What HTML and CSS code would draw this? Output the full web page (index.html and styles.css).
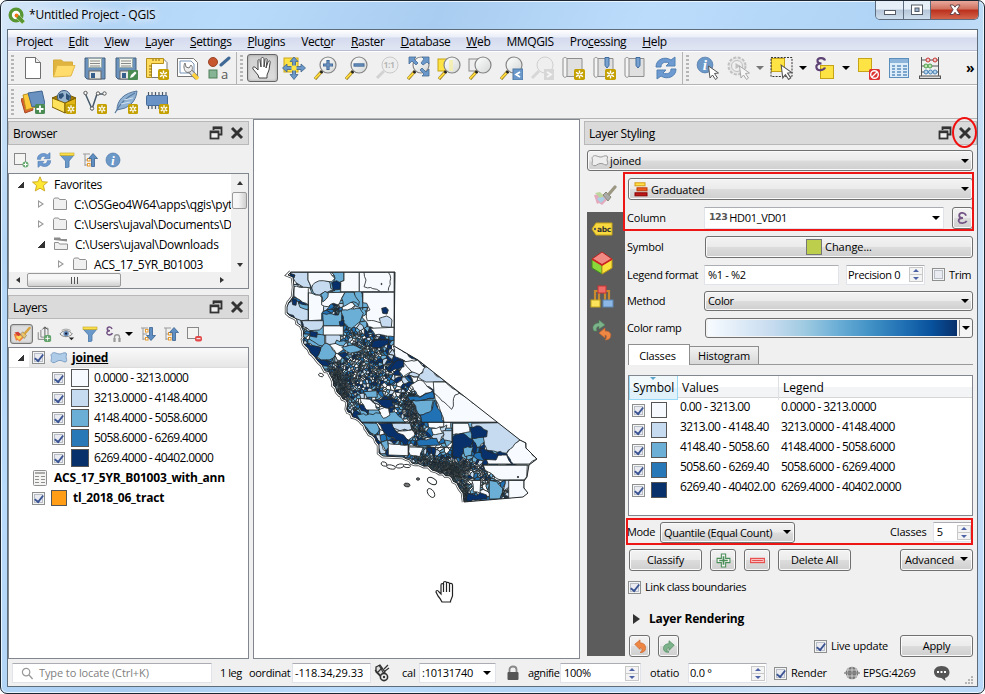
FILE: index.html
```html
<!DOCTYPE html>
<html lang="en">
<head>
<meta charset="utf-8">
<title>*Untitled Project - QGIS</title>
<link rel="stylesheet" href="styles.css">
</head>
<body>
<svg class="defs" aria-hidden="true">
  <defs>
    <linearGradient id="lens" x1="0" y1="0" x2="1" y2="1"><stop offset="0" stop-color="#fff"/><stop offset="1" stop-color="#d4d7d7"/></linearGradient>
    <symbol id="i-star" viewBox="0 0 10 10"><rect width="10" height="10" rx="1.500" fill="#c4a000"/><path d="M5 1.300v7.400M1.800 3.100l6.400 3.800M8.200 3.100L1.800 6.900" stroke="#fff" stroke-width="1.300"/><circle cx="5" cy="5" r="1" fill="#c4a000"/></symbol>
    <symbol id="i-new" viewBox="0 0 24 24"><path d="M4.500 1.500h10l5 5v16h-15z" fill="#fff" stroke="#6f6f6f"/><path d="M14.500 1.500v5h5" fill="#eee" stroke="#6f6f6f"/></symbol>
    <symbol id="i-open" viewBox="0 0 24 24"><path d="M1.500 20V4h8l2 2h9v4" fill="#e0b43e" stroke="#d6aa38"/><path d="M1.500 21L5 9.500h18L19 20z" fill="#ffdc6b" stroke="#e2b849"/></symbol>
    <symbol id="i-save" viewBox="0 0 24 24"><path d="M2 2h20v21H4l-2-2z" fill="#6a92bd" stroke="#44617f"/><rect x="5.500" y="2.500" width="13" height="9" fill="#f4f4ee" stroke="#9aa"/><path d="M7 5h10M7 7.500h10M7 10h10" stroke="#888"/><rect x="6" y="15" width="12" height="8" fill="#e6e9e6" stroke="#666"/><rect x="8" y="17" width="4" height="5" fill="#355e8b"/></symbol>
    <symbol id="i-saveas" viewBox="0 0 24 24"><use href="#i-save"/><rect x="14" y="14" width="10" height="10" rx="1" fill="#4a8a53"/><path d="M16 22l1-3 4-3.500 1.500 1.500-3.500 4z" fill="#fff"/></symbol>
    <symbol id="i-layout" viewBox="0 0 24 24"><path d="M6 2.500h12l4 4v15H6z" fill="#fff" stroke="#777"/><path d="M1.500 2.500h17v5h-12v14h-5z" fill="#ffdc5d" stroke="#b58f1c"/><path d="M4 10h3M4 13h3M4 16h3M4 19h3M8 3v2M11 3v2M14 3v2" stroke="#8a6c10"/><use href="#i-star" x="13" y="13" width="11" height="11"/></symbol>
    <symbol id="i-manager" viewBox="0 0 24 24"><path d="M1.500 2.500h16l4 4v14h-20z" fill="#fff" stroke="#777"/><path d="M4 5h11l3 3v9H4z" fill="none" stroke="#7795bb"/><path d="M12 13l9 9" stroke="#777" stroke-width="4.600"/><path d="M12 13l6 6" stroke="#ddd" stroke-width="3"/><path d="M17 18l5 5" stroke="#ffd13a" stroke-width="3.600"/><path d="M9 7l1 4 3 1 2-3c2 2 2 5-1 7l-3 .5C8 15 7 10 9 7z" fill="#eee" stroke="#777"/></symbol>
    <symbol id="i-style" viewBox="0 0 24 24"><circle cx="6" cy="6" r="4.500" fill="#c7562e" stroke="#994426"/><path d="M14 9l8-7" stroke="#416996" stroke-width="3" stroke-linecap="round"/><rect x="2" y="14" width="8" height="8" fill="#86b494" stroke="#4f7e59"/><text x="14" y="23" font-family="Open Sans,sans-serif" font-size="13" fill="#555">a</text></symbol>
    <symbol id="i-hand" viewBox="0 0 24 24"><path d="M8 22l-1-3-5-6c-1-2 1-3 3-1l2 2V5c0-2 2-2 2 0l1 6V3c0-2 3-2 3 0v8l1-7c0-2 3-2 2 1l-1 7 2-6c1-2 3-1 2 1l-1 7-2 5v3z" fill="#fff" stroke="#444" stroke-linejoin="round"/></symbol>
    <symbol id="i-grab" viewBox="0 0 20 24"><path d="M7 22c-1-2-2-4-4-6l-2-4c0-2 2-2 3 0l2 2V5c0-2 2.500-2 2.500 0V3c0-2 3-2 3 0 0-1 3-1 3 1 0-1 3-1 3 1v11l-2 5v1z" fill="#fff" stroke="#222" stroke-width="1.200"/><path d="M8.500 4v8M11.500 3v9M14.500 4v8" stroke="#222" stroke-width="1.200"/></symbol>
    <symbol id="i-pansel" viewBox="0 0 24 24"><rect x="2" y="2" width="14" height="14" fill="#fee345" stroke="#cba414"/><path d="M12 1l4 4.500h-2.500v5H19V8l4.500 4-4.500 4v-2.500h-5.500v5H16L12 23.500 8 18.500h2.500v-5H5V16L.5 12 5 8v2.500h5.500v-5H8z" fill="#6a98ca" stroke="#416488" stroke-width=".8"/><rect x="9.500" y="9.500" width="5" height="5" fill="#fee345"/></symbol>
    <symbol id="i-lens" viewBox="0 0 24 24"><path d="M9 15L2 23" stroke="#8b7323" stroke-width="3.200"/><path d="M8.500 16L2 22.500" stroke="#ffd93b" stroke-width="2"/><circle cx="8.500" cy="16" r="1.500" fill="#222"/><circle cx="15" cy="9" r="8" fill="url(#lens)" stroke="#858585" stroke-width="1.200"/></symbol>
    <symbol id="i-zin" viewBox="0 0 24 24"><use href="#i-lens"/><path d="M15 4v10M10 9h10" stroke="#426a9b" stroke-width="3.200"/><path d="M15 5v8M11 9h8" stroke="#78a1cc"/></symbol>
    <symbol id="i-zout" viewBox="0 0 24 24"><use href="#i-lens"/><path d="M9.500 9h11" stroke="#426a9b" stroke-width="3.400"/><path d="M10.500 9h9" stroke="#78a1cc"/></symbol>
    <symbol id="i-z11" viewBox="0 0 24 24"><g opacity=".55"><path d="M9 15L2 22" stroke="#bbb" stroke-width="3"/><circle cx="15" cy="9" r="8" fill="#eee" stroke="#aaa"/><text x="8.500" y="12" font-family="Open Sans,sans-serif" font-weight="bold" font-size="8.500" fill="#888">1:1</text></g></symbol>
    <symbol id="i-zfull" viewBox="0 0 24 24"><use href="#i-lens"/><path d="M3 1h7L8 3l4 4-2 2-4-4-3 3zM23 1v7l-2-2-4 3-2-2 3-4-2-2zM23 20h-7l2-2-4-4 2-2 4 4 3-3z" fill="#6a98ca" stroke="#456b96" stroke-width=".8"/></symbol>
    <symbol id="i-zsel" viewBox="0 0 24 24"><rect x="1" y="3" width="12" height="12" fill="#fee345" stroke="#c6a317"/><use href="#i-lens"/><path d="M12 4h4v11h-4z" fill="#f4efa8" opacity=".8"/></symbol>
    <symbol id="i-zlay" viewBox="0 0 24 24"><rect x="1" y="3" width="12" height="12" fill="#eee" stroke="#888"/><use href="#i-lens"/></symbol>
    <symbol id="i-zprev" viewBox="0 0 24 24"><use href="#i-lens"/><rect x="14" y="13" width="10" height="11" fill="#6a98ca" stroke="#4e78a5"/><path d="M21 16l-4 2.500 4 2.500" fill="none" stroke="#fff" stroke-width="1.800"/></symbol>
    <symbol id="i-znext" viewBox="0 0 24 24"><g opacity=".45"><path d="M9 15L2 22" stroke="#bbb" stroke-width="3"/><circle cx="15" cy="9" r="8" fill="#eee" stroke="#aaa"/><rect x="14" y="13" width="10" height="11" fill="#bbb"/><path d="M17 16l4 2.500-4 2.500" fill="none" stroke="#fff" stroke-width="1.800"/></g></symbol>
    <symbol id="i-scroll" viewBox="0 0 24 24"><path d="M5 2.500h16v18H6" fill="#e0e0e0" stroke="#8e8e8e"/><path d="M2 3c0-2 4-2 4 0v16c0 3-4 3-4 0z" fill="#f4f4f4" stroke="#8e8e8e"/></symbol>
    <symbol id="i-map" viewBox="0 0 24 24"><use href="#i-scroll"/><use href="#i-star" x="13" y="13" width="11" height="11"/></symbol>
    <symbol id="i-bm" viewBox="0 0 24 24"><use href="#i-scroll"/><path d="M13 1.500h4v8l-2 2.500-2-2.500z" fill="#77a1ce" stroke="#3f6ca0"/></symbol>
    <symbol id="i-bmnew" viewBox="0 0 24 24"><use href="#i-bm"/><use href="#i-star" x="13" y="13" width="11" height="11"/></symbol>
    <symbol id="i-refresh" viewBox="0 0 24 24"><path d="M2 11C2 3 11 0 17 4l4-3v9h-9l3-3c-4-2-8 0-8 4z" fill="#6d9bd1" stroke="#5380b3"/><path d="M22 13c0 8-9 11-15 7l-4 3v-9h9l-3 3c4 2 8 0 8-4z" fill="#6d9bd1" stroke="#5380b3"/></symbol>
    <symbol id="i-cur" viewBox="0 0 12 15"><path d="M1 1l10 7-4 .5 3 4.500-2 1.500-3-4.500-2.500 3z" fill="#fff" stroke="#555"/></symbol>
    <symbol id="i-info" viewBox="0 0 24 24"><circle cx="12" cy="12" r="10.500" fill="#6d99c8" stroke="#4975a7"/><text x="9" y="19" font-family="Liberation Serif,serif" font-weight="bold" font-style="italic" font-size="20" fill="#fff">i</text></symbol>
    <symbol id="i-ident" viewBox="0 0 24 24"><use href="#i-info" x="0" y="0" width="18" height="18"/><use href="#i-cur" x="11" y="9" width="13" height="15"/></symbol>
    <symbol id="i-action" viewBox="0 0 24 24"><g opacity=".45"><circle cx="10" cy="10" r="8.500" fill="#ddd" stroke="#888" stroke-width="2" stroke-dasharray="3 1.500"/><circle cx="10" cy="10" r="5.500" fill="#eee" stroke="#888"/><path d="M8.500 7l5 3-5 3z" fill="#888"/><use href="#i-cur" x="11" y="9" width="13" height="15"/></g></symbol>
    <symbol id="i-select" viewBox="0 0 24 24"><rect x="1.500" y="2.500" width="13" height="13" fill="#fee345" stroke="#c6a317"/><rect x="1" y="1.500" width="21" height="19" fill="none" stroke="#333" stroke-dasharray="2 1.200"/><use href="#i-cur" x="9" y="8" width="15" height="16"/></symbol>
    <symbol id="i-expr" viewBox="0 0 24 24"><rect x="7.500" y="9.500" width="13" height="13" fill="#fee345" stroke="#c6a317"/><path d="M12 4.500c-1-3.500-8-3-7.500.5 0 2 2 2.500 4 2.500-3.500 0-6 1.500-5 4.500 1 3.500 7.500 2.500 8.500-.5" fill="none" stroke="#5d4174" stroke-width="2.200"/></symbol>
    <symbol id="i-desel" viewBox="0 0 24 24"><rect x="2.500" y="2.500" width="13" height="13" fill="#fee345" stroke="#c6a317"/><rect x="13" y="13" width="11" height="11" rx="1.500" fill="#d33"/><circle cx="18.500" cy="18.500" r="3.800" fill="none" stroke="#fff" stroke-width="1.400"/><path d="M16 21l5-5" stroke="#fff" stroke-width="1.300"/></symbol>
    <symbol id="i-table" viewBox="0 0 24 24"><rect x="2.500" y="2.500" width="19" height="19" fill="#dcecf8" stroke="#5b8dbd"/><path d="M3 5h18" stroke="#8db5da" stroke-width="4"/><path d="M5 10h3M10 10h4M16 10h4M5 13h3M10 13h4M16 13h4M5 16h3M10 16h4M16 16h4M5 19h3M10 19h4M16 19h4" stroke="#5b8dbd" stroke-width="1.300"/></symbol>
    <symbol id="i-abacus" viewBox="0 0 24 24"><path d="M3.500 1v20M20.500 1v20M3 4h18M3 10h18M3 16h18" stroke="#555"/><rect x="1.500" y="20" width="21" height="2.500" fill="#ddd" stroke="#555"/><g fill="#eecccc" stroke="#c33"><circle cx="10" cy="4" r="2"/><circle cx="17" cy="4" r="2"/></g><g fill="#c2e5b2" stroke="#4d9e4f"><circle cx="8" cy="10" r="2"/><circle cx="12" cy="10" r="2"/></g><g fill="#b9d6ec" stroke="#4a83b5"><circle cx="8" cy="16" r="2"/><circle cx="12.500" cy="16" r="2"/><circle cx="17" cy="16" r="2"/></g></symbol>
    <symbol id="i-dsm" viewBox="0 0 24 24"><path d="M0 9l9-2 3 13-8 3z" fill="#d9622f" stroke="#a8481f"/><path d="M2 5l8-2 5 14-10 3z" fill="#ffca3a" stroke="#bb911c"/><path d="M7 3l14-2 3 13-13 3z" fill="#6992c1" stroke="#41658f"/><rect x="14" y="14" width="10" height="10" rx="1.500" fill="#4a8a53"/><path d="M19 15.500v7M15.500 19h7" stroke="#fff" stroke-width="1.800"/></symbol>
    <symbol id="i-gpkg" viewBox="0 0 24 24"><path d="M0 8l12-5 12 5-11 6z" fill="#a67f05" stroke="#7a5d00"/><circle cx="12" cy="7" r="6.500" fill="#9ab5d0" stroke="#395b80"/><path d="M7 4l4-1 1 3-3 3-2-1zM14 3l4 3-1 5-3-2z" fill="#2f5278"/><path d="M0 8l13 5v10L0 17z" fill="#ffe25c" stroke="#7a5d00"/><path d="M13 13l11-5v9l-11 6z" fill="#e2b616" stroke="#7a5d00"/><use href="#i-star" x="14" y="14" width="10" height="10"/></symbol>
    <symbol id="i-shp" viewBox="0 0 24 24"><path d="M2 3l7 16L14 4h6" fill="none" stroke="#44596b" stroke-width="1.500"/><g fill="#fff" stroke="#555"><circle cx="2.500" cy="3" r="1.700"/><circle cx="9" cy="18.500" r="1.700"/><circle cx="15" cy="3.500" r="1.700"/><circle cx="21.500" cy="3.500" r="1.700"/></g><use href="#i-star" x="14" y="14" width="10" height="10"/></symbol>
    <symbol id="i-feather" viewBox="0 0 24 24"><path d="M3 20C3 10 10 3 23 1c-1 8-4 13-12 17-3 1-5 1-8 2z" fill="#8fb1d4" stroke="#55789e"/><path d="M1 23C5 15 11 8 21 3" fill="none" stroke="#55789e" stroke-width="1.200"/><path d="M7 14l9-2M10 10l9-2" stroke="#d3e3f1"/><use href="#i-star" x="14" y="14" width="10" height="10"/></symbol>
    <symbol id="i-chip" viewBox="0 0 24 24"><path d="M3.500 2v17M7 2v17M10.500 2v17M14 2v17M17.500 2v17M21 2v17" stroke="#4c5a68" stroke-width="1.200"/><rect x="1.500" y="5.500" width="21" height="10" rx="1" fill="#6992c6" stroke="#456b9a"/><use href="#i-star" x="14" y="14" width="10" height="10"/></symbol>
    <symbol id="i-float" viewBox="0 0 14 14"><path d="M4.500 4V1.500h8v7H10" fill="none" stroke="#333" stroke-width="1.800"/><path d="M4 2h9" stroke="#333" stroke-width="2.400"/><rect x="1.500" y="5.500" width="8" height="7" fill="#eee" stroke="#333" stroke-width="1.800"/><path d="M1 6h9" stroke="#333" stroke-width="2.400"/></symbol>
    <symbol id="i-x" viewBox="0 0 14 14"><path d="M2 2l10 10M12 2L2 12" stroke="#333" stroke-width="2.900"/></symbol>
    <symbol id="i-addlay" viewBox="0 0 16 16"><rect x="1.500" y="1.500" width="11" height="11" fill="#f4f4f2" stroke="#888"/><circle cx="12.500" cy="12.500" r="3" fill="#6aab72"/><path d="M12.500 10.500v4M10.500 12.500h4" stroke="#fff"/></symbol>
    <symbol id="i-funnel" viewBox="0 0 16 16"><path d="M1 3h14l-5 6v6l-3.500 1V9z" fill="#6a98c8" stroke="#4a78a8" stroke-width=".8"/><rect x="1" y="1" width="14" height="2.600" fill="#fbe04c" stroke="#c4a520" stroke-width=".6"/></symbol>
    <symbol id="i-up" viewBox="0 0 16 16"><path d="M1 2h7M3 2v12M3 8h4M3 13h4" fill="none" stroke="#999"/><rect x="5.500" y="6.500" width="2.500" height="2.500" fill="#fff" stroke="#e79a2d"/><rect x="5.500" y="11.500" width="2.500" height="2.500" fill="#fff" stroke="#e79a2d"/><path d="M11 1.500l4.500 5h-3v8h-3v-8h-3z" fill="#5f8fc3" stroke="#39618e" stroke-width=".8"/></symbol>
    <symbol id="i-down" viewBox="0 0 16 16"><path d="M1 2h7M3 2v12M3 8h4M3 13h4" fill="none" stroke="#999"/><rect x="5.500" y="3.500" width="2.500" height="2.500" fill="#fff" stroke="#e79a2d"/><rect x="5.500" y="11.500" width="2.500" height="2.500" fill="#fff" stroke="#e79a2d"/><path d="M11 14.500l4.500-5h-3v-8h-3v8h-3z" fill="#5f8fc3" stroke="#39618e" stroke-width=".8"/></symbol>
    <symbol id="i-fav" viewBox="0 0 16 16"><path d="M8 .8l2.100 4.900 5.400.4-4.100 3.500 1.300 5.300L8 12.200l-4.700 2.700 1.300-5.300L.5 6.100l5.400-.4z" fill="#ffe733" stroke="#c8a41c" stroke-width=".9"/></symbol>
    <symbol id="i-folder" viewBox="0 0 16 14"><path d="M1.500 2.500l1-1.500h4l1 1.500h6l1 1v9h-13z" fill="#f0f0f0" stroke="#909090"/></symbol>
    <symbol id="i-folder2" viewBox="0 0 16 14"><path d="M1 3V.5h6l1 1.500h6v2.500" fill="#8c8c8c"/><path d="M1.500 12.500v-7h4l1 1.500h8v5.500z" fill="#f0f0f0" stroke="#909090"/></symbol>
    <symbol id="i-poly" viewBox="0 0 18 14"><path d="M2 2.500c2-2 4 0 7 .5s4-2 7-1c1.500 1-.5 3 .2 5s.8 4-1.200 4-3-2-6-1.500-4 3-6.500 2-.8-3-1-5-1-3 .5-4z" fill="var(--pf,#aecbe8)" stroke="var(--ps,#7d9fc4)"/></symbol>
    <symbol id="i-eye" viewBox="0 0 18 16"><path d="M1 8c4-5 10-5 14 0-4 4-10 4-14 0z" fill="#eee" stroke="#777"/><circle cx="8" cy="7.500" r="3" fill="#6088b5"/><circle cx="8" cy="7.500" r="1.300" fill="#113"/><path d="M3 4c3-2 7-2 10 0" fill="none" stroke="#999"/><path d="M11 12h6l-3 3z" fill="#222"/></symbol>
    <symbol id="i-brush" viewBox="0 0 24 24"><path d="M1 12l8-1 5 6-5 5-3-2-2 1z" fill="var(--bb,#f0823b)"/><path d="M4 16l4-4 4 4-4 4z" fill="var(--bc,#fcd95c)"/><path d="M2 10l5-1 4 4-4 2z" fill="var(--bd,#cf3f34)"/><path d="M10 12l3-3 5 5-3 4z" fill="var(--bf,#e8c46a)" stroke="#887"/><path d="M16 11l6-7" stroke="var(--be,#d7a33a)" stroke-width="3.200" stroke-linecap="round"/></symbol>
    <symbol id="i-group" viewBox="0 0 18 18"><path d="M2.500 7v8h7M5.500 4.500v8h7M8.500 2.500h5v8" fill="none" stroke="#777"/><path d="M10 1v10M7 4l3-3 3 3" fill="none" stroke="#555"/><rect x="9" y="10" width="8" height="8" rx="2" fill="#64a36c"/><path d="M13 11.500v5M10.500 14h5" stroke="#fff"/></symbol>
    <symbol id="i-eps" viewBox="0 0 14 14"><path d="M11 4C9-.5 3 .5 3.500 4c0 2 2 2.500 4 2.500-3 0-5 1.200-4.500 3.500 1 3 7 2.500 8.500-.5" fill="none" stroke="#755586" stroke-width="2"/></symbol>
    <symbol id="i-epsfilter" viewBox="0 0 16 16"><path d="M7 3C6 0 2 .7 2.300 3c0 1.400 1.400 1.800 2.700 1.800-2 0-3.400.8-3 2.600.6 2.200 4.600 1.800 5.500-.2" fill="none" stroke="#755586" stroke-width="1.600"/><path d="M9.500 14v-3c0-3 5-3 5 0v3" fill="none" stroke="#999" stroke-width="1.300"/><path d="M9.500 12v4M14.500 12v4" stroke="#999" stroke-width="2.200"/></symbol>
    <symbol id="i-rm" viewBox="0 0 16 16"><rect x="1.500" y="1.500" width="11" height="11" fill="#f4f4f2" stroke="#888"/><rect x="9" y="10" width="7" height="5.500" rx="2" fill="#e24a4a"/><path d="M10.500 12.700h4" stroke="#fff"/></symbol>
    <symbol id="i-tbl" viewBox="0 0 14 16"><rect x=".5" y=".5" width="13" height="15" rx="1" fill="#f4f4f2" stroke="#8f8f8f"/><path d="M2 3h10" stroke="#aaa" stroke-width="2"/><path d="M2 6.500h4M8 6.500h4M2 9.500h4M8 9.500h4M2 12.500h4M8 12.500h4" stroke="#8f8f8f"/></symbol>
    <symbol id="i-undo" viewBox="0 0 16 16"><path d="M2 6l6-5v3.500c5 0 7 3 6 8-1 2-3 3-6 3 3-1.500 3-5.500 0-5.500V12z" fill="#ee8644" stroke="#c9642a" stroke-width=".8"/></symbol>
    <symbol id="i-redo" viewBox="0 0 16 16"><path d="M14 7L8 2v3.500c-5 0-7 3-6 7 1 2 3 3 6 2.500-3-1.500-3-5 0-5V13z" fill="#7db38a" stroke="#4f8a5d" stroke-width=".8"/></symbol>
    <symbol id="i-search" viewBox="0 0 14 14"><circle cx="5.500" cy="5.500" r="4" fill="none" stroke="#999" stroke-width="1.300"/><path d="M8.500 8.500L12.500 13" stroke="#999" stroke-width="1.500"/></symbol>
    <symbol id="i-grip" viewBox="0 0 9 9"><path d="M7 1h2M4 4h2M7 4h2M1 7h2M4 7h2M7 7h2" stroke="#b5b5b5" stroke-width="2"/></symbol>
  </defs>
</svg>

<div class="window">
  <header class="titlebar">
    <svg class="logo" viewBox="0 0 18 18"><circle cx="8.500" cy="8.500" r="6.200" fill="#fff" stroke="#589632" stroke-width="3.600"/><path d="M8 8l4 .5 6 6.500-3 3-6-6z" fill="#589632" stroke="#d8efc4" stroke-width=".6"/><circle cx="9" cy="9" r="2" fill="#ee7913"/></svg>
    <span class="title">*Untitled Project - QGIS</span>
    <div class="winbtns">
      <span class="wb wb-min"><svg viewBox="0 0 14 12"><rect x="1.500" y="6.500" width="11" height="4" fill="#fff" stroke="#555c68"/></svg></span>
      <span class="wb wb-max"><svg viewBox="0 0 14 12"><rect x="1.500" y="1" width="11" height="9.500" fill="#fff" stroke="#555c68"/><rect x="5" y="4" width="4" height="3.500" fill="#9db5d0" stroke="#555c68"/></svg></span>
      <span class="wb wb-close"><svg viewBox="0 0 14 12"><path d="M2 1h3.300L7 3.200 8.700 1H12L8.900 5.800 12 10.500H8.700L7 8.300l-1.700 2.200H2l3.100-4.700z" fill="#fff" stroke="#5b3b44" stroke-width=".9"/></svg></span>
    </div>
  </header>

  <div class="client">
    <nav class="menubar">
      <span>Pro<u>j</u>ect</span><span><u>E</u>dit</span><span><u>V</u>iew</span><span><u>L</u>ayer</span><span><u>S</u>ettings</span><span><u>P</u>lugins</span><span>Vect<u>o</u>r</span><span><u>R</u>aster</span><span><u>D</u>atabase</span><span><u>W</u>eb</span><span>MMQGIS</span><span>Pro<u>c</u>essing</span><span><u>H</u>elp</span>
    </nav>
    <div class="toolbar">
      <div class="tgroup g1">
        <i class="handle"></i>
        <span class="t"><svg><use href="#i-new"/></svg></span><span class="t"><svg><use href="#i-open"/></svg></span><span class="t"><svg><use href="#i-save"/></svg></span><span class="t"><svg><use href="#i-saveas"/></svg></span><span class="t"><svg><use href="#i-layout"/></svg></span><span class="t"><svg><use href="#i-manager"/></svg></span><span class="t"><svg><use href="#i-style"/></svg></span>
      </div>
      <div class="tgroup g2">
        <i class="handle"></i>
        <span class="t on"><svg><use href="#i-hand"/></svg></span><span class="t"><svg><use href="#i-pansel"/></svg></span><span class="t"><svg><use href="#i-zin"/></svg></span><span class="t"><svg><use href="#i-zout"/></svg></span><span class="t"><svg><use href="#i-z11"/></svg></span><span class="t"><svg><use href="#i-zfull"/></svg></span><span class="t"><svg><use href="#i-zsel"/></svg></span><span class="t"><svg><use href="#i-zlay"/></svg></span><span class="t"><svg><use href="#i-zprev"/></svg></span><span class="t"><svg><use href="#i-znext"/></svg></span><span class="t"><svg><use href="#i-map"/></svg></span><span class="t"><svg><use href="#i-bmnew"/></svg></span><span class="t"><svg><use href="#i-bm"/></svg></span><span class="t"><svg><use href="#i-refresh"/></svg></span>
      </div>
      <div class="tgroup g3">
        <i class="handle"></i>
        <span class="t"><svg><use href="#i-ident"/></svg></span><span class="t"><svg><use href="#i-action"/></svg></span><i class="caret dim"></i><span class="t"><svg><use href="#i-select"/></svg></span><i class="caret"></i><span class="t"><svg><use href="#i-expr"/></svg></span><i class="caret"></i><span class="t"><svg><use href="#i-desel"/></svg></span><span class="t"><svg><use href="#i-table"/></svg></span><span class="t"><svg><use href="#i-abacus"/></svg></span>
        <b class="more">»</b>
      </div>
    </div>
    <div class="toolbar">
      <div class="tgroup">
        <i class="handle"></i>
        <span class="t"><svg><use href="#i-dsm"/></svg></span><span class="t"><svg><use href="#i-gpkg"/></svg></span><span class="t"><svg><use href="#i-shp"/></svg></span><span class="t"><svg><use href="#i-feather"/></svg></span><span class="t"><svg><use href="#i-chip"/></svg></span>
      </div>
    </div>

    <main class="work">
      <section class="left">
        <div class="dockbar"><span>Browser</span><svg><use href="#i-float"/></svg><svg><use href="#i-x"/></svg></div>
        <div class="mini">
          <svg><use href="#i-addlay"/></svg><svg><use href="#i-refresh"/></svg><svg><use href="#i-funnel"/></svg><svg><use href="#i-up"/></svg><svg><use href="#i-info"/></svg>
        </div>
        <div class="tree browser">
          <div class="treemain">
            <ul class="rows">
              <li class="l0"><i class="open"></i><svg class="fav"><use href="#i-fav"/></svg><span>Favorites</span></li>
              <li class="l1"><i class="shut"></i><svg class="fol"><use href="#i-folder"/></svg><span>C:\OSGeo4W64\apps\qgis\pyt</span></li>
              <li class="l1"><i class="shut"></i><svg class="fol"><use href="#i-folder"/></svg><span>C:\Users\ujaval\Documents\D</span></li>
              <li class="l1"><i class="open"></i><svg class="fol"><use href="#i-folder2"/></svg><span>C:\Users\ujaval\Downloads</span></li>
              <li class="l2"><i class="shut"></i><svg class="fol"><use href="#i-folder"/></svg><span>ACS_17_5YR_B01003</span></li>
            </ul>
            <div class="vbar"><i class="tri up"></i><b></b><i class="tri dn"></i></div>
          </div>
          <div class="hbar"><i class="tri lt"></i><b><s></s><s></s><s></s></b><i class="tri rt"></i></div>
        </div>
        <div class="dockbar second"><span>Layers</span><svg><use href="#i-float"/></svg><svg><use href="#i-x"/></svg></div>
        <div class="mini layers-tools">
          <span class="pressed"><svg><use href="#i-brush"/></svg></span><svg><use href="#i-group"/></svg><svg><use href="#i-eye"/></svg><svg><use href="#i-funnel"/></svg><svg><use href="#i-epsfilter"/></svg><i class="caret"></i><svg><use href="#i-down"/></svg><svg><use href="#i-up"/></svg><svg><use href="#i-rm"/></svg>
        </div>
        <div class="tree layers">
          <ul class="rows">
            <li class="l0 sel"><i class="open"></i><span class="cb"></span><svg class="poly"><use href="#i-poly"/></svg><b><u>joined</u></b></li>
            <li class="l3"><span class="cb"></span><i class="sw c1"></i><span class="num">0.0000 - 3213.0000</span></li>
            <li class="l3"><span class="cb"></span><i class="sw c2"></i><span class="num">3213.0000 - 4148.4000</span></li>
            <li class="l3"><span class="cb"></span><i class="sw c3"></i><span class="num">4148.4000 - 5058.6000</span></li>
            <li class="l3"><span class="cb"></span><i class="sw c4"></i><span class="num">5058.6000 - 6269.4000</span></li>
            <li class="l3"><span class="cb"></span><i class="sw c5"></i><span class="num">6269.4000 - 40402.0000</span></li>
            <li class="l4"><svg class="tbl"><use href="#i-tbl"/></svg><b>ACS_17_5YR_B01003_with_ann</b></li>
            <li class="l4"><span class="cb"></span><i class="sw c6"></i><b>tl_2018_06_tract</b></li>
          </ul>
        </div>
      </section>

      <section class="canvas">
        <svg id="map" viewBox="254 120 325 538"></svg>
      </section>

      <section class="right">
        <div class="dockbar"><span>Layer Styling</span><svg><use href="#i-float"/></svg><svg><use href="#i-x"/></svg><i class="ring"></i></div>
        <div class="combo layer-combo"><svg class="poly plain"><use href="#i-poly"/></svg><span>joined</span><i class="caret"></i></div>
        <div class="styling">
          <aside class="side">
            <div class="sidetop"><svg class="brush2"><use href="#i-brush"/></svg></div>
            <div class="sidedark">
              <svg viewBox="0 0 24 24"><path d="M2 12l4-6h16v12H6z" fill="#f7d93f" stroke="#c9a61b"/><circle cx="5" cy="12" r="1.200" fill="#5c5c5c"/><text x="7" y="15" font-family="DejaVu Sans,sans-serif" font-weight="bold" font-size="7.500" fill="#333">abc</text></svg>
              <svg viewBox="0 0 24 24"><path d="M12 1l10 7-10 6L2 8z" fill="#f08a82" stroke="#b22"/><path d="M2 8l10 6v9L2 17z" fill="#8ad83a" stroke="#3f8a1c"/><path d="M22 8l-10 6v9l10-6z" fill="#fbe13c" stroke="#b99a14"/><path d="M2 8l10 6 10-6" fill="none" stroke="#c22" stroke-width="1.600"/></svg>
              <svg viewBox="0 0 24 24"><path d="M5 16V6h14v10M9 7v12M15 7v12" fill="none" stroke="#c8892f" stroke-width="2.200"/><rect x="8" y="1" width="8" height="7" fill="#ee6c68" stroke="#c33"/><rect x="1" y="15" width="9" height="7" fill="#fbe45c" stroke="#c4a520"/><rect x="13" y="15" width="10" height="7" fill="#8db8e6" stroke="#5c87b5"/></svg>
              <svg viewBox="0 0 24 24"><path d="M4 12C1 7 5 4 9 4V1l6 5-6 4V7.500c-2 0-3.500 2-2 4.500z" fill="#7db38a" stroke="#4f8a5d" stroke-width=".6"/><path d="M9 14l6-5v3c5 0 7 3 5 7-1 1.500-3 2-5 2 2-1.500 2-5 0-5v3z" fill="#ee8644" stroke="#c9642a" stroke-width=".6"/></svg>
            </div>
          </aside>
          <div class="form">
            <div class="combo renderer"><svg class="grad" viewBox="0 0 14 15"><rect x="1" y=".8" width="10" height="3" fill="#ffe04a" stroke="#d69a12"/><rect x="3" y="5.800" width="10" height="3" fill="#f05a1c" stroke="#b83c0c"/><rect x="1" y="10.800" width="12" height="3" fill="#c01818" stroke="#800"/></svg><span>Graduated</span><i class="caret"></i></div>
            <div class="row r-column"><label>Column</label><div class="input"><b class="n123">123</b><span>HD01_VD01</span><i class="caret"></i></div><div class="btn eps"><svg><use href="#i-eps"/></svg></div></div>
            <div class="row r-symbol"><label>Symbol</label><div class="btn change"><i class="green"></i>Change...</div></div>
            <div class="row r-legend"><label>Legend format</label><div class="input fmt">%1 - %2</div><div class="input prec"><span>Precision 0</span><i class="spin"></i></div><span class="cb off"></span><span class="trim">Trim</span></div>
            <div class="row r-method"><label>Method</label><div class="combo"><span>Color</span><i class="caret"></i></div></div>
            <div class="row r-ramp"><label>Color ramp</label><div class="ramp"><i class="bar"></i><span><i class="caret"></i></span></div></div>
            <div class="tabs"><span class="tab active">Classes</span><span class="tab">Histogram</span></div>
            <div class="table">
              <div class="th"><span class="sorted">Symbol</span><span>Values</span><span>Legend</span></div>
              <div class="tr"><span><i class="cb"></i><i class="sw c1"></i></span><span>0.00 - 3213.00</span><span>0.0000 - 3213.0000</span></div>
              <div class="tr"><span><i class="cb"></i><i class="sw c2"></i></span><span>3213.00 - 4148.40</span><span>3213.0000 - 4148.4000</span></div>
              <div class="tr"><span><i class="cb"></i><i class="sw c3"></i></span><span>4148.40 - 5058.60</span><span>4148.4000 - 5058.6000</span></div>
              <div class="tr"><span><i class="cb"></i><i class="sw c4"></i></span><span>5058.60 - 6269.40</span><span>5058.6000 - 6269.4000</span></div>
              <div class="tr"><span><i class="cb"></i><i class="sw c5"></i></span><span>6269.40 - 40402.00</span><span>6269.4000 - 40402.0000</span></div>
            </div>
            <div class="row r-mode"><label>Mode</label><div class="combo"><span>Quantile (Equal Count)</span><i class="caret"></i></div><span class="cl">Classes</span><div class="input five"><span>5</span><i class="spin"></i></div></div>
            <div class="row r-btns"><div class="btn b72">Classify</div><div class="btn b26"><svg viewBox="0 0 14 14"><path d="M5 1h4v4h4v4H9v4H5V9H1V5h4z" fill="#f4f4f4" stroke="#4b8f58"/><path d="M7 3v8M3 7h8" stroke="#4b8f58" stroke-width="1.600"/></svg></div><div class="btn b26"><svg viewBox="0 0 14 14"><rect x="0" y="4.500" width="14" height="5" fill="#e85050"/><rect x="1.200" y="5.600" width="11.600" height="2.800" fill="#fbd4d4"/><path d="M2 7h10" stroke="#e85050" stroke-width="1.200"/></svg></div><div class="btn b72">Delete All</div><div class="btn b72 adv">Advanced<i class="caret"></i></div></div>
            <div class="row r-link"><span class="cb"></span><span>Link class boundaries</span></div>
            <div class="row r-render"><i class="tri rt big"></i><b>Layer Rendering</b></div>
            <div class="row r-apply"><div class="btn b21"><svg><use href="#i-undo"/></svg></div><div class="btn b21"><svg><use href="#i-redo"/></svg></div><span class="cb"></span><span>Live update</span><div class="btn b72">Apply</div></div>
            <i class="mark m1"></i><i class="mark m2"></i>
          </div>
        </div>
      </section>
    </main>

    <footer class="status">
      <div class="input locate"><svg><use href="#i-search"/></svg><span>Type to locate (Ctrl+K)</span></div>
      <span class="w-leg">1 leg</span>
      <span class="w-coord">oordinat</span>
      <div class="input coord">-118.34,29.33</div>
      <svg class="mouse" viewBox="0 0 16 18"><path d="M2 3l4-2 5 7-5 4-4-4z" fill="#ddd" stroke="#333" stroke-width="1.300"/><path d="M1 6l8 8M5 1l5 9M14 1l-4 4M15 4l-4 3M3 9l5-5" stroke="#333" stroke-width="1.200"/><circle cx="10" cy="13" r="3.600" fill="#eee" stroke="#333" stroke-width="1.600"/><circle cx="10" cy="13" r="1.200" fill="#333"/></svg>
      <span class="w-cal">cal</span>
      <div class="input scale"><span>:10131740</span><i class="caret"></i></div>
      <svg class="lock" viewBox="0 0 12 16"><path d="M2.500 8V4.500c0-4 7-4 7 0V8" fill="none" stroke="#888" stroke-width="1.800"/><rect x=".5" y="7" width="11" height="8" rx="1" fill="#555"/></svg>
      <span class="w-mag">agnifie</span>
      <div class="input mag"><span>100%</span><i class="spin"></i></div>
      <span class="w-rot">otatio</span>
      <div class="input rot"><span>0.0 °</span><i class="spin"></i></div>
      <span class="cb"></span><span class="w-render">Render</span>
      <svg class="globe" viewBox="0 0 16 14"><circle cx="8" cy="7" r="6.300" fill="#777"/><path d="M0 7h16M2 4h12M2 10h12M8 0v14M5 1c-2 4-2 8 0 12M11 1c2 4 2 8 0 12" fill="none" stroke="#ddd" stroke-width=".8"/><path d="M0 7h16" stroke="#666"/></svg>
      <span class="w-epsg">EPSG:4269</span>
      <svg class="chat" viewBox="0 0 16 16"><path d="M8 1c10 0 10 11 3.500 12L12 16l-4-3C-2 13-2 1 8 1z" fill="#555"/><path d="M3.500 7h2M7 7h2M10.500 7h2" stroke="#fff" stroke-width="1.800"/></svg>
      <svg class="gripper"><use href="#i-grip"/></svg>
    </footer>
  </div>
</div>
<script src="map.js"></script>
</body>
</html>
```
FILE: styles.css
```css
* { box-sizing: border-box; }
html, body { margin: 0; height: 100%; }
body { width: 985px; height: 694px; overflow: hidden; background: #fff; font: 12px/20px "Open Sans", "Noto Sans", sans-serif; letter-spacing: -.35px; color: #000; white-space: nowrap; }
.defs { position: absolute; width: 0; height: 0; }
ul { list-style: none; margin: 0; padding: 0; }
i { font-style: normal; }
svg { display: block; flex: none; }
b { letter-spacing: -.18px; }

.window { width: 985px; height: 694px; border: 1px solid #1c2530; border-radius: 7px; display: flex; flex-direction: column; padding: 0 6px 6px; box-shadow: inset 0 0 0 1px #e8f5ff; background: linear-gradient(115deg, #d8e8f8 0, #b4d6f6 9%, #b9dbfb 18%, #a9cdf0 34%, #bcdcfb 50%, #b0d4f5 68%, #cfe4f8 85%, #b8d8f8 100%); }
.titlebar { height: 28px; display: flex; align-items: flex-start; }
.logo { width: 17px; height: 17px; margin: 6px 0 0 1px; }
.title { margin: 4px 0 0 4px; padding: 0 10px 0 0; font-size: 12px; letter-spacing: -.22px; text-shadow: 0 0 8px #fff, 0 0 8px #fff; }
.winbtns { margin-left: auto; margin-right: -1px; display: flex; height: 19px; border: 1px solid #5c6b7d; border-top: 0; border-radius: 0 0 5px 5px; overflow: hidden; }
.wb { display: flex; align-items: center; justify-content: center; background: linear-gradient(#e6eef7 0 45%, #b5c6d9 50%, #cfdeed); border-right: 1px solid #5c6b7d; }
.wb svg { width: 14px; height: 12px; }
.wb-min { width: 28px; } .wb-max { width: 27px; }
.wb-close { width: 47px; border: 0; background: linear-gradient(#e8a99c 0, #d1705e 45%, #bb2f1c 50%, #d3654c); }

.client { flex: 1; border: 1px solid #5f6c7a; background: #f0f0f0; display: flex; flex-direction: column; width: 971px; min-height: 0; }
.menubar { height: 21px; flex: none; display: flex; gap: 16px; padding-left: 8px; line-height: 23px; letter-spacing: -.37px; background: linear-gradient(#fff 0, #e9edf7 35%, #d5dbee 40%, #e0e5f3 95%); border-bottom: 1px solid #b6bccc; }
.menubar span { flex: none; }
u { text-underline-offset: 1px; text-decoration-thickness: 1px; }
.toolbar { height: 34px; flex: none; display: flex; border-bottom: 1px solid #b4b4b4; border-top: 1px solid #fff; }
.tgroup { display: flex; align-items: center; padding-left: 3px; }
.g1 { width: 229px; border-right: 1px solid #b4b4b4; }
.g2 { width: 446px; border-right: 1px solid #b4b4b4; }
.g3 { flex: 1; }
.handle { width: 3px; height: 27px; margin-right: 3px; background: repeating-linear-gradient(#b6b6b6 0 2px, transparent 2px 4px); }
.t { width: 31px; height: 28px; display: flex; align-items: center; justify-content: center; flex: none; }
.t svg { width: 24px; height: 24px; }
.t.on { border: 1px solid #666; border-radius: 3px; background: linear-gradient(#cfcfcf, #dedede); box-shadow: inset 0 0 3px #999; }
.g2 .handle { margin-right: 4px; }
.caret { display: inline-block; flex: none; width: 0; height: 0; border: 4px solid transparent; border-top: 4px solid #000; border-bottom: 0; }
.g3 .caret { margin: 0 2.500px 0 1.500px; }
.caret.dim { border-top-color: #777; }
.more { margin-left: 21px; font-size: 14px; }

.work { height: 540px; display: flex; }
.left { width: 241px; padding-top: 2px; display: flex; flex-direction: column; }
.dockbar { height: 24px; flex: none; display: flex; align-items: center; gap: 7px; background: #dadada; border: 1px solid #b8b8b8; padding: 0 4px; position: relative; }
.dockbar span { margin: 1px auto 0 0; letter-spacing: -.35px; }
.dockbar svg { width: 14px; height: 14px; }
.second { margin-top: 6px; }
.mini { height: 28px; flex: none; display: flex; align-items: center; gap: 7px; padding: 2px 0 0 5px; }
.mini > svg { width: 16px; height: 16px; }
.tree { background: #fff; border: 1px solid #82868f; overflow: hidden; }
.browser { height: 116px; display: flex; flex-direction: column; }
.treemain { display: flex; flex: 1; min-height: 0; overflow: hidden; }
.rows { flex: 1; min-width: 0; overflow: hidden; }
.rows li { height: 20px; display: flex; align-items: center; }
.browser .rows li { letter-spacing: -.3px; }
.browser .rows li span { margin-top: 1px; }
.rows li > .open { width: 7px; height: 7px; background: linear-gradient(135deg, transparent 50%, #333 50%); flex: none; }
.rows li > .shut { width: 0; height: 0; border: 4px solid transparent; border-left: 6px solid #999; border-right: 0; flex: none; position: relative; }
.shut::after { content: ""; position: absolute; left: -5px; top: -2.500px; border: 2.500px solid transparent; border-left: 3.500px solid #fff; border-right: 0; }
.l0 { padding-left: 8px; } .l1 { padding-left: 29px; } .l2 { padding-left: 49px; }
.fav { width: 16px; height: 16px; margin: 0 6px 0 8px; }
.fol { width: 16px; height: 14px; margin: 0 6px 0 8px; }
.vbar { width: 17px; flex: none; background: #f0f0f0; display: flex; flex-direction: column; align-items: center; padding: 7px 1px 5px; }
.vbar b { width: 15px; height: 17px; margin-top: 7px; margin-bottom: auto; border: 1px solid #999; border-radius: 2px; background: linear-gradient(90deg, #f6f6f6 40%, #cfcfcf); }
.hbar { height: 16px; flex: none; background: #f0f0f0; display: flex; align-items: center; padding: 0 24px 0 7px; }
.hbar b { width: 94px; height: 14px; margin-left: 7px; margin-right: auto; border: 1px solid #999; border-radius: 2px; background: linear-gradient(#f6f6f6 40%, #cfcfcf); display: flex; gap: 2px; align-items: center; justify-content: center; }
.hbar s { width: 1px; height: 7px; background: #555; }
.tri { width: 0; height: 0; border: 3.500px solid transparent; flex: none; }
.tri.up { border-top: 0; border-bottom: 4px solid #333; } .tri.dn { border-bottom: 0; border-top: 4px solid #333; }
.tri.lt { border-left: 0; border-right: 4px solid #333; } .tri.rt { border-right: 0; border-left: 4px solid #333; }
.tri.big { border-width: 5.500px 0 5.500px 7px; border-left-color: #333; }

.layers-tools { padding: 2px 0 0 2px; gap: 7px; }
.layers-tools > svg { width: 16px; }
.layers-tools .pressed { width: 23px; height: 20px; margin-right: -4px; border: 1px solid #777; border-radius: 3px; background: #ddd; box-shadow: inset 0 0 2px #888; display: flex; justify-content: center; align-items: center; }
.pressed svg { width: 18px; height: 18px; }
.layers-tools .caret { margin-left: -3px; }
.layers { flex: 1; }
.layers .rows li.sel { background: linear-gradient(90deg, #fff 20px, transparent 20px), linear-gradient(#fafafa, #e6e6e6); border-bottom: 1px solid #ddd; }
.l0 .cb { margin-left: 8px; }
.cb { display: inline-block; flex: none; width: 13px; height: 13px; border: 1px solid #8e8f8f; background: #e9ebf0; box-shadow: inset 0 0 0 1px #f4f4f4, inset 0 0 0 2px #b8bec8; position: relative; }
.cb::after { content: ""; position: absolute; left: 3px; top: 0; width: 4px; height: 8px; border: solid #3a5392; border-width: 0 2px 2px 0; transform: rotate(38deg) scale(.9); }
.cb.off::after { display: none; }
.poly { width: 18px; height: 14px; margin: 0 4px 0 5px; }
.plain { --pf: #eee; --ps: #999; }
.l3 { padding-left: 43px; } .l4 { padding-left: 23px; }
.sw { display: block; flex: none; width: 18px; height: 18px; border: 1px solid #555; }
.l3 .sw { margin: 0 5px 0 6px; } .l4 .sw { margin: 0 6px 0 6px; width: 16px; height: 16px; }
.num { letter-spacing: -.63px; }
.tbl { width: 14px; height: 16px; margin: 0 7px 0 1px; }
.c1 { background: #f7fbff; } .c2 { background: #c6dbef; } .c3 { background: #6baed6; } .c4 { background: #2878b8; } .c5 { background: #08306b; } .c6 { background: #ff9d17; }

.canvas { width: 327px; margin-left: 4px; border: 1px solid #82868f; background: #fff; flex: none; }
.canvas svg { width: 325px; height: 538px; }

.right { width: 393px; margin-left: 4px; padding-top: 2px; flex: none; font-size: 11px; letter-spacing: -.33px; }
.right .dockbar { font-size: 12px; padding-right: 4px; gap: 6px; }
.ring { position: absolute; right: -1px; top: -5px; width: 25px; height: 31px; border: 2px solid #f01010; border-radius: 50%; }
.combo { height: 21px; display: flex; align-items: center; border: 1px solid #707070; border-radius: 3px; background: linear-gradient(#f3f3f3, #ebebeb 48%, #dcdcdc 52%, #cfcfcf); box-shadow: inset 0 0 0 1px #fafafa; padding: 0 3px; line-height: 19px; }
.combo .caret, .input > .caret { margin-left: auto; }
.layer-combo { margin: 5px 3px 0; width: 386px; letter-spacing: -.1px; }
.layer-combo .poly { margin: 0 1px 0 0; }
.styling { display: flex; padding-left: 3px; margin-top: 5px; }
.side { width: 38px; height: 480px; display: flex; flex-direction: column; margin-right: 3px; flex: none; }
.sidetop { height: 36px; padding: 7px 0 0 6px; }
.brush2 { width: 24px; height: 24px; --bb: #e3a9bd; --bc: #a9cfe4; --bd: #bdd59c; --be: #9c9782; --bf: #aaa; }
.sidedark { background: #5c5c5c; flex: 1; padding: 5px 0 0 3px; display: flex; flex-direction: column; gap: 10px; }
.sidedark svg { width: 24px; height: 24px; }
.form { width: 345px; position: relative; }
.row { display: flex; align-items: center; }
.row label { width: 77px; flex: none; margin-left: -1px; }
.renderer { margin-top: 2px; height: 22px; letter-spacing: -.15px; }
.grad { width: 14px; height: 15px; margin: 0 3px 0 2px; }
.input { height: 20px; background: #fff; border: 1px solid #e0e3ea; border-top-color: #abadb3; border-radius: 1px; display: flex; align-items: center; padding: 0 3px; line-height: 18px; overflow: hidden; }
.r-column { height: 22px; margin-top: 7px; }
.r-column .input { width: 240px; height: 22px; }
.r-column label, .r-symbol label { letter-spacing: -.2px; }
.n123 { font: bold 9.500px/18px "DejaVu Sans", sans-serif; color: #555; margin: 0 2px 2px 1px; letter-spacing: -.5px; }
.btn { display: flex; align-items: center; justify-content: center; height: 22px; border: 1px solid #707070; border-radius: 3px; background: linear-gradient(#f3f3f3, #ebebeb 48%, #dcdcdc 52%, #cfcfcf); box-shadow: inset 0 0 0 1px #fafafa; flex: none; }
.eps { width: 21px; margin-left: 8px; }
.eps svg { width: 13px; height: 13px; }
.r-symbol { margin-top: 7px; }
.change { width: 268px; margin-left: 1px; letter-spacing: -.05px; }
.green { width: 16px; height: 16px; background: #bcce4c; border: 1px solid #777; margin-right: 3px; }
.r-legend { margin-top: 6px; height: 21px; }
.fmt { width: 135px; }
.prec { width: 79px; margin: 0 7px; padding: 0 1px; }
.trim { margin-left: 4px; }
.spin { margin-left: auto; width: 14px; height: 15px; flex: none; border: 1px solid #c8c8c8; background: linear-gradient(#f4f4f4 0 45%, #c8c8c8 45% 54%, #f4f4f4 54%); position: relative; }
.spin::before, .spin::after { content: ""; position: absolute; left: 3px; border: 3px solid transparent; }
.spin::before { top: 1px; border-top: 0; border-bottom-color: #4d62a6; }
.spin::after { bottom: 1px; border-bottom: 0; border-top-color: #4d62a6; }
.r-method { margin-top: 5px; }
.r-method .combo { flex: 1; height: 20px; }
.r-method label { padding-top: 1px; }
.r-ramp { margin-top: 7px; }
.ramp { flex: 1; height: 20px; display: flex; border: 1px solid #707070; border-radius: 3px; background: #f4f4f4; padding: 1px 0 1px 2px; margin-left: 1px; }
.ramp .bar { flex: 1; background: linear-gradient(90deg, #f7fbff, #deebf7 13%, #c6dbef 26%, #9ecae1 39%, #6baed6 52%, #4292c6 65%, #2171b5 78%, #08519c 90%, #08306b); }
.ramp span { width: 13px; margin-left: 2px; border-left: 1px solid #888; display: flex; align-items: center; justify-content: center; }
.tabs { height: 21px; margin-top: 6px; display: flex; align-items: flex-end; border-bottom: 1px solid #999; }
.tab { height: 18px; width: 69px; text-align: center; line-height: 18px; border: 1px solid #8e8e8e; border-left: 0; border-bottom: 0; background: linear-gradient(#f2f2f2, #d8d8d8); letter-spacing: -.18px; }
.tab.active { width: 62px; height: 21px; line-height: 21px; margin-bottom: -1px; border-left: 1px solid #8e8e8e; background: #fff; padding-right: 3px; }
.table { height: 141px; margin-top: 10px; border: 1px solid #82868f; background: #fff; font-size: 12px; letter-spacing: -.59px; }
.th, .tr { display: grid; grid-template-columns: 49px 101px 1fr; }
.th { height: 22px; line-height: 23px; letter-spacing: 0; background: linear-gradient(#fff 50%, #f3f4f6 52%); border-bottom: 1px solid #d5d5d5; }
.th span { padding-left: 4px; border-right: 1px solid #dfe0e3; }
.th span:last-child { border: 0; }
.th .sorted { padding-left: 3px; background: linear-gradient(#f2f9fc 50%, #e0f1fa 52%); border: 1px solid #96d9f9; border-top: 0; position: relative; }
.sorted::before { content: ""; position: absolute; top: 1px; left: 20px; border: 3.500px solid transparent; border-top-color: #5ba4cc; border-bottom: 0; }
.tr { height: 20px; line-height: 18px; }
.tr span:nth-child(n+2) { padding-left: 2px; }
.tr span:first-child { display: flex; align-items: center; padding: 2px 0 0 3px; gap: 6px; height: 22px; }
.tr .sw { width: 16px; height: 16px; }
.r-mode { margin-top: 5px; height: 22px; }
.r-mode label { width: 33px; }
.r-mode .combo { width: 135px; height: 21px; padding: 0 3px; }
.cl { margin-left: 95px; letter-spacing: -.15px; }
.five { width: 39px; margin-left: 6px; padding-right: 0; }
.r-btns { margin-top: 6px; padding-left: 1px; gap: 8.500px; letter-spacing: -.15px; }
.b72 { width: 73px; } .b26 { width: 26px; } .b26 svg { width: 15px; height: 15px; } .b21 { width: 21px; }
.r-btns > :nth-child(n+2):nth-child(-n+4) { margin-left: -.5px; }
.b21 svg { width: 14px; height: 14px; }
.r-btns > .adv { margin-left: auto; } .adv .caret { margin: -2px 0 0 6px; }
.r-link { margin-top: 6px; gap: 4px; height: 20px; letter-spacing: -.42px; }
.r-render { margin-top: 12px; padding-left: 5px; gap: 9px; height: 20px; font-size: 12px; }
.r-apply { margin-top: 6px; padding-left: 1px; height: 22px; letter-spacing: -.22px; }
.r-apply .b21:nth-child(2) { margin-left: 8px; }
.r-apply .cb { margin: 0 4px 0 135px; }
.r-apply .b72 { margin-left: auto; }
.mark { position: absolute; border: 2px solid #ee1515; }
.m1 { left: -5px; top: -4px; width: 351px; height: 59px; }
.m2 { left: -2px; top: 342px; width: 347px; height: 27px; }

.status { height: 28px; display: flex; align-items: center; font-size: 11px; letter-spacing: -.25px; padding: 1px 0 0 4px; }
.status > * { flex: none; }
.locate { width: 200px; color: #808080; padding-left: 8px; gap: 5px; letter-spacing: -.1px; }
.locate svg { width: 13px; height: 13px; }
.w-leg { width: 22px; margin-left: 8px; letter-spacing: -.45px; }
.w-coord { width: 40px; margin-left: 7px; letter-spacing: -.35px; }
.coord { width: 79px; margin-left: 3px; padding: 0 2px; letter-spacing: -.05px; }
.mouse { width: 16px; height: 18px; margin-left: 3px; }
.w-cal { width: 13px; margin-left: 12px; }
.scale { width: 77px; margin-left: 4px; margin-right: 11px; padding: 0 4px 0 2px; }
.lock { width: 12px; height: 16px; }
.w-mag { width: 30px; margin-left: 9px; margin-right: 2px; letter-spacing: -.4px; }
.mag { width: 81px; padding-right: 1px; }
.w-rot { width: 29px; margin-left: 9px; margin-right: 9px; letter-spacing: -.1px; }
.rot { width: 79px; margin-right: 7px; padding: 0 1px; }
.w-render { margin-left: 4px; width: 53px; letter-spacing: -.2px; }
.globe { width: 16px; height: 14px; }
.w-epsg { width: 54px; margin-left: 3px; margin-right: 16px; }
.chat { width: 17px; height: 16px; }
.gripper { width: 9px; height: 9px; margin: 14px 0 0 14px; }
```
FILE: map.js
```js
// Census tracts: seeded Voronoi cells for the dense areas, larger rural tracts as polygons above them.
(function () {
  var svg = document.getElementById('map');
  var seed = 77;
  function rnd() { seed = (seed * 16807) % 2147483647; return seed / 2147483647; }
  function gauss() { return (rnd() + rnd() + rnd() - 1.5) * 1.3; }
  var C = ['#f7fbff', '#c6dbef', '#6baed6', '#2171b5', '#08306b'];
  var INK = '#252a2c';
  var coast = [[464,502],[463,493],[457,483],[452,478],[443,473],[432,470],[428,466],[415,464],[410,460],[403,457],[383,456],[379,453],[379,445],[375,438],[362,423],[348,412],[346,400],[337,392],[332,378],[323,367],[313,355],[304,344],[302,328],[295,318],[287,313],[287,307],[293,297],[294,287],[293,277],[288,275],[291,272]];
  var inland = [[395,272],[394,346],[418,360],[520,440],[526,443],[526,448],[537,459],[529,465],[527,477],[524,481],[524,488],[528,493],[523,497]];

  function rough(pts, closed, amp) {
    var out = [], n = pts.length;
    for (var i = 0; i < (closed ? n : n - 1); i++) {
      var a = pts[i], b = pts[(i + 1) % n];
      out.push(a);
      var dx = b[0] - a[0], dy = b[1] - a[1], len = Math.hypot(dx, dy);
      if (Math.abs(dx) < 1.1 || Math.abs(dy) < 1.1) continue;
      var k = Math.floor(len / 3);
      for (var j = 1; j < k; j++) out.push([a[0] + dx * j / k + (rnd() - .5) * amp, a[1] + dy * j / k + (rnd() - .5) * amp]);
    }
    if (!closed) out.push(pts[n - 1]);
    return out;
  }
  function d(pts, closed) { return 'M' + pts.map(function (p) { return p[0].toFixed(1) + ' ' + p[1].toFixed(1); }).join('L') + (closed ? 'Z' : ''); }
  function add(parent, tag, attrs) {
    var e = document.createElementNS('http://www.w3.org/2000/svg', tag);
    for (var k in attrs) e.setAttribute(k, attrs[k]);
    parent.appendChild(e);
    return e;
  }
  var shore = rough(coast, false, 2.4);
  var outline = shore.concat(inland);
  add(add(svg, 'clipPath', { id: 'state' }), 'path', { d: d(outline, true) });
  add(svg, 'path', { d: d(shore), fill: 'none', stroke: '#4a4e50', 'stroke-width': 4.4 });
  add(svg, 'path', { d: d(shore), fill: 'none', stroke: '#fff', 'stroke-width': 2.8 });
  var g = add(svg, 'g', { 'clip-path': 'url(#state)', stroke: INK, 'stroke-width': .85, 'stroke-linejoin': 'round' });
  add(g, 'path', { d: d(outline, true), fill: C[0] });

  // [x, y, spread x, spread y, count]
  var clusters = [[336,376,6,11,260],[343,390,6,9,190],[352,380,10,9,80],[357,356,11,12,130],[368,352,12,12,60],[376,372,14,14,110],[350,402,9,9,60],[370,392,20,14,70],[408,402,8,11,170],[414,416,7,8,130],[392,398,14,12,30],[445,467,13,6,420],[455,473,9,7,280],[466,466,8,6,110],[464,490,4,10,150],[424,459,10,5,110],[418,432,8,6,100],[444,455,10,12,30],[390,436,20,12,25],[486,478,9,8,50],[470,497,10,5,24],[502,494,3,4,40],[337,309,3,6,40],[343,322,9,5,24],[305,332,6,12,24],[378,330,18,12,50],[400,382,14,14,34],[293,302,4,9,12],[345,300,36,30,24],[372,440,12,14,14],[470,445,26,12,20],[352,334,10,6,40],[375,348,16,8,60],[480,468,9,5,40],[412,449,14,5,30]];
  var sites = [];
  clusters.forEach(function (c) { for (var i = 0; i < c[4]; i++) sites.push([c[0] + gauss() * c[2], c[1] + gauss() * c[3]]); });
  sites.forEach(function (s, i) {
    var R = 14, cell = [[s[0] - R, s[1] - R], [s[0] + R, s[1] - R], [s[0] + R, s[1] + R], [s[0] - R, s[1] + R]];
    for (var j = 0; j < sites.length && cell.length; j++) {
      if (j === i) continue;
      var t = sites[j], nx = t[0] - s[0], ny = t[1] - s[1];
      if (nx * nx + ny * ny > 1600) continue;
      var m = (t[0] * t[0] + t[1] * t[1] - s[0] * s[0] - s[1] * s[1]) / 2, next = [];
      for (var k = 0; k < cell.length; k++) {
        var a = cell[k], b = cell[(k + 1) % cell.length];
        var da = a[0] * nx + a[1] * ny - m, db = b[0] * nx + b[1] * ny - m;
        if (da <= 0) next.push(a);
        if (da * db < 0) { var q = da / (da - db); next.push([a[0] + (b[0] - a[0]) * q, a[1] + (b[1] - a[1]) * q]); }
      }
      cell = next;
    }
    if (cell.length) add(g, 'path', { d: d(rough(cell, true, 2.4), true), fill: C[Math.floor(rnd() * 5)] });
  });

  function parse(str, ox, oy) { return str.split(' ').map(function (p) { p = p.split(','); return [ox + p[0] / 3, oy + p[1] / 3]; }); }
  function draw(list, ox, oy) {
    list.forEach(function (t) { add(g, 'path', { d: d(rough(parse(t[1], ox, oy), true, 2), true), fill: C[t[0]] }); });
  }
  draw([
    [1,'30,37 84,37 84,60 92,84 70,82 50,70 40,55'],
    [0,'84,37 150,37 165,55 155,65 130,65 95,84 84,60'],
    [0,'42,80 90,84 95,98 85,135 60,120 42,108'],
    [0,'85,98 118,105 135,130 125,160 125,180 85,182'],
    [0,'130,98 195,97 185,115 175,135 160,130 145,140 125,135'],
    [1,'95,84 105,68 130,62 148,65 152,85 165,92 130,98 118,105 100,98'],
    [2,'122,104 135,94 145,100 138,118 128,126'],
    [2,'155,37 192,37 192,62 160,68 165,55'],
    [0,'192,37 238,37 238,95 182,95 182,65 192,62'],
    [4,'155,68 170,62 182,70 180,88 160,90'],
    [0,'238,37 343,37 343,95 238,95'],
    [0,'248,97 343,97 343,202 330,202 300,210 265,200 245,170 270,150 260,130 248,128'],
    [1,'298,175 320,168 336,180 334,202 305,200'],
    [2,'195,97 222,97 238,125 236,137 220,125 190,140 185,115'],
    [1,'15,150 25,130 45,118 85,150 85,180 65,182 45,175'],
    [2,'55,128 85,135 85,150 60,142'],
    [0,'130,197 190,197 190,225 130,225'],
    [2,'128,160 175,165 185,150 185,197 130,197'],
    [2,'185,150 240,145 250,160 240,185 215,205 190,190'],
    [1,'65,182 130,182 130,195 118,210 90,212 70,200'],
    [0,'270,205 343,202 343,230 285,225'],
    [0,'340,258 430,312 425,340 395,330 370,300 345,290'],
    [0,'372,300 395,335 370,350 358,335'],
    [4,'305,145 318,142 325,150 321,162 308,160'],[4,'35,115 50,120 48,136 38,134'],
    [4,'90,212 112,216 110,232 90,228'],[4,'30,40 45,45 42,54 30,50'],
    [4,'282,242 325,238 325,252 300,264 275,262'],
    [4,'320,325 355,298 368,310 350,325 325,335'],
    [2,'170,240 200,245 190,258 165,250'],[2,'185,262 220,255 250,270 210,280'],[4,'178,185 192,180 192,198 180,198']
  ], 280, 260);
  draw([
    [0,'245,5 293,0 318,25 300,45 275,35'],
    [1,'318,20 375,65 318,66 295,52'],
    [0,'340,66 375,66 540,187 372,187 342,98'],
    [0,'270,75 300,60 338,92 300,110'],
    [3,'305,187 300,165 335,150 345,120 372,187'],
    [2,'275,122 340,120 335,150 300,165'],
    [3,'262,108 300,112 338,94 342,116 270,122'],
    [1,'455,190 540,188 600,240 560,280 500,270 490,225 455,200'],
    [4,'450,202 478,198 502,212 500,230 455,235'],
    [0,'398,190 445,190 450,215 398,225'],
    [0,'600,240 617,250 618,265 650,298 628,312 580,312 560,280'],
    [0,'490,315 622,315 620,350 612,360 545,360 495,330'],
    [0,'566,361 612,361 612,385 625,400 610,414 566,417'],
    [2,'508,361 530,365 548,385 540,417 508,417'],
    [0,'455,361 482,361 480,400 460,395'],
    [4,'398,230 430,220 460,240 450,260 435,270 420,295 398,290'],
    [2,'430,265 460,260 455,285 435,290'],
    [0,'500,290 560,285 575,312 505,312'],
    [4,'480,265 535,285 528,300 490,298'],
    [2,'125,189 170,190 178,210 165,225 145,210'],
    [1,'215,190 270,190 275,208 240,212 215,205'],
    [0,'225,215 275,210 285,225 265,240'],
    [4,'175,190 215,190 225,210 265,240 262,255 200,225'],
    [3,'290,242 350,235 360,255 295,258'],
    [1,'368,212 396,212 396,245 372,240'],
    [0,'205,250 265,255 265,287 205,285'],
    [0,'265,258 310,262 300,290 270,285'],
    [0,'335,205 360,200 368,220 340,224'],
    [2,'110,165 180,160 225,155 258,187 125,187'],
    [0,'175,150 205,142 210,165 190,175'],
    [4,'160,120 215,118 225,140 205,145 185,138'],
    [0,'120,115 150,118 178,150 140,150'],
    [2,'130,95 170,92 172,112 140,112'],
    [4,'225,5 250,0 252,20 205,35'],
    [4,'445,400 470,408 480,398 500,405 500,417 440,423']
  ], 320, 360);
  function line(s, ox, oy) { add(g, 'path', { d: d(rough(parse(s, ox, oy), false, 2)), fill: 'none' }); }
  line('125,187 540,187', 320, 360); line('397,187 397,305', 320, 360); line('265,255 265,288', 320, 360); line('265,261 397,263', 320, 360);
  line('360,115 395,148 405,105 420,95', 320, 360); line('342,98 360,115', 320, 360); line('448,361 612,361', 320, 360); line('480,315 630,315', 320, 360);
  line('252,37 258,60 252,80 290,88 300,94', 280, 260); line('325,37 332,55 325,92', 280, 260); line('85,85 85,182', 280, 260); line('248,97 248,150', 280, 260); line('255,150 262,182 300,188', 280, 260);
  line('343,30 343,255', 280, 260);
  add(g, 'circle', { cx: 381.5, cy: 284, r: .6, fill: INK }); add(g, 'circle', { cx: 518, cy: 477, r: .7, fill: INK });

  add(svg, 'path', { d: d(outline, true), fill: 'none', stroke: INK, 'stroke-width': 1 });
  var isl = { fill: '#fff', stroke: INK, 'stroke-width': .9 };
  [[384,464,3,2,20],[391,467,4.5,2,10],[400,466,4,2,-10],[407,466,3.5,1.600,5],[418,479,1.6,1.2,0],[407,485,3,1.8,10],[432,481,5,3,30],[431,493,5,3,55],[321,375,2.5,1.6,20]].forEach(function (e) {
    add(svg, 'ellipse', Object.assign({ cx: e[0], cy: e[1], rx: e[2], ry: e[3], transform: 'rotate(' + e[4] + ' ' + e[0] + ' ' + e[1] + ')' }, isl, e[1] === 485 || e[1] === 479 ? { fill: '#777' } : {}));
  });
  add(svg, 'use', { href: '#i-grab', x: 435, y: 580, width: 20, height: 24 });
})();
```
